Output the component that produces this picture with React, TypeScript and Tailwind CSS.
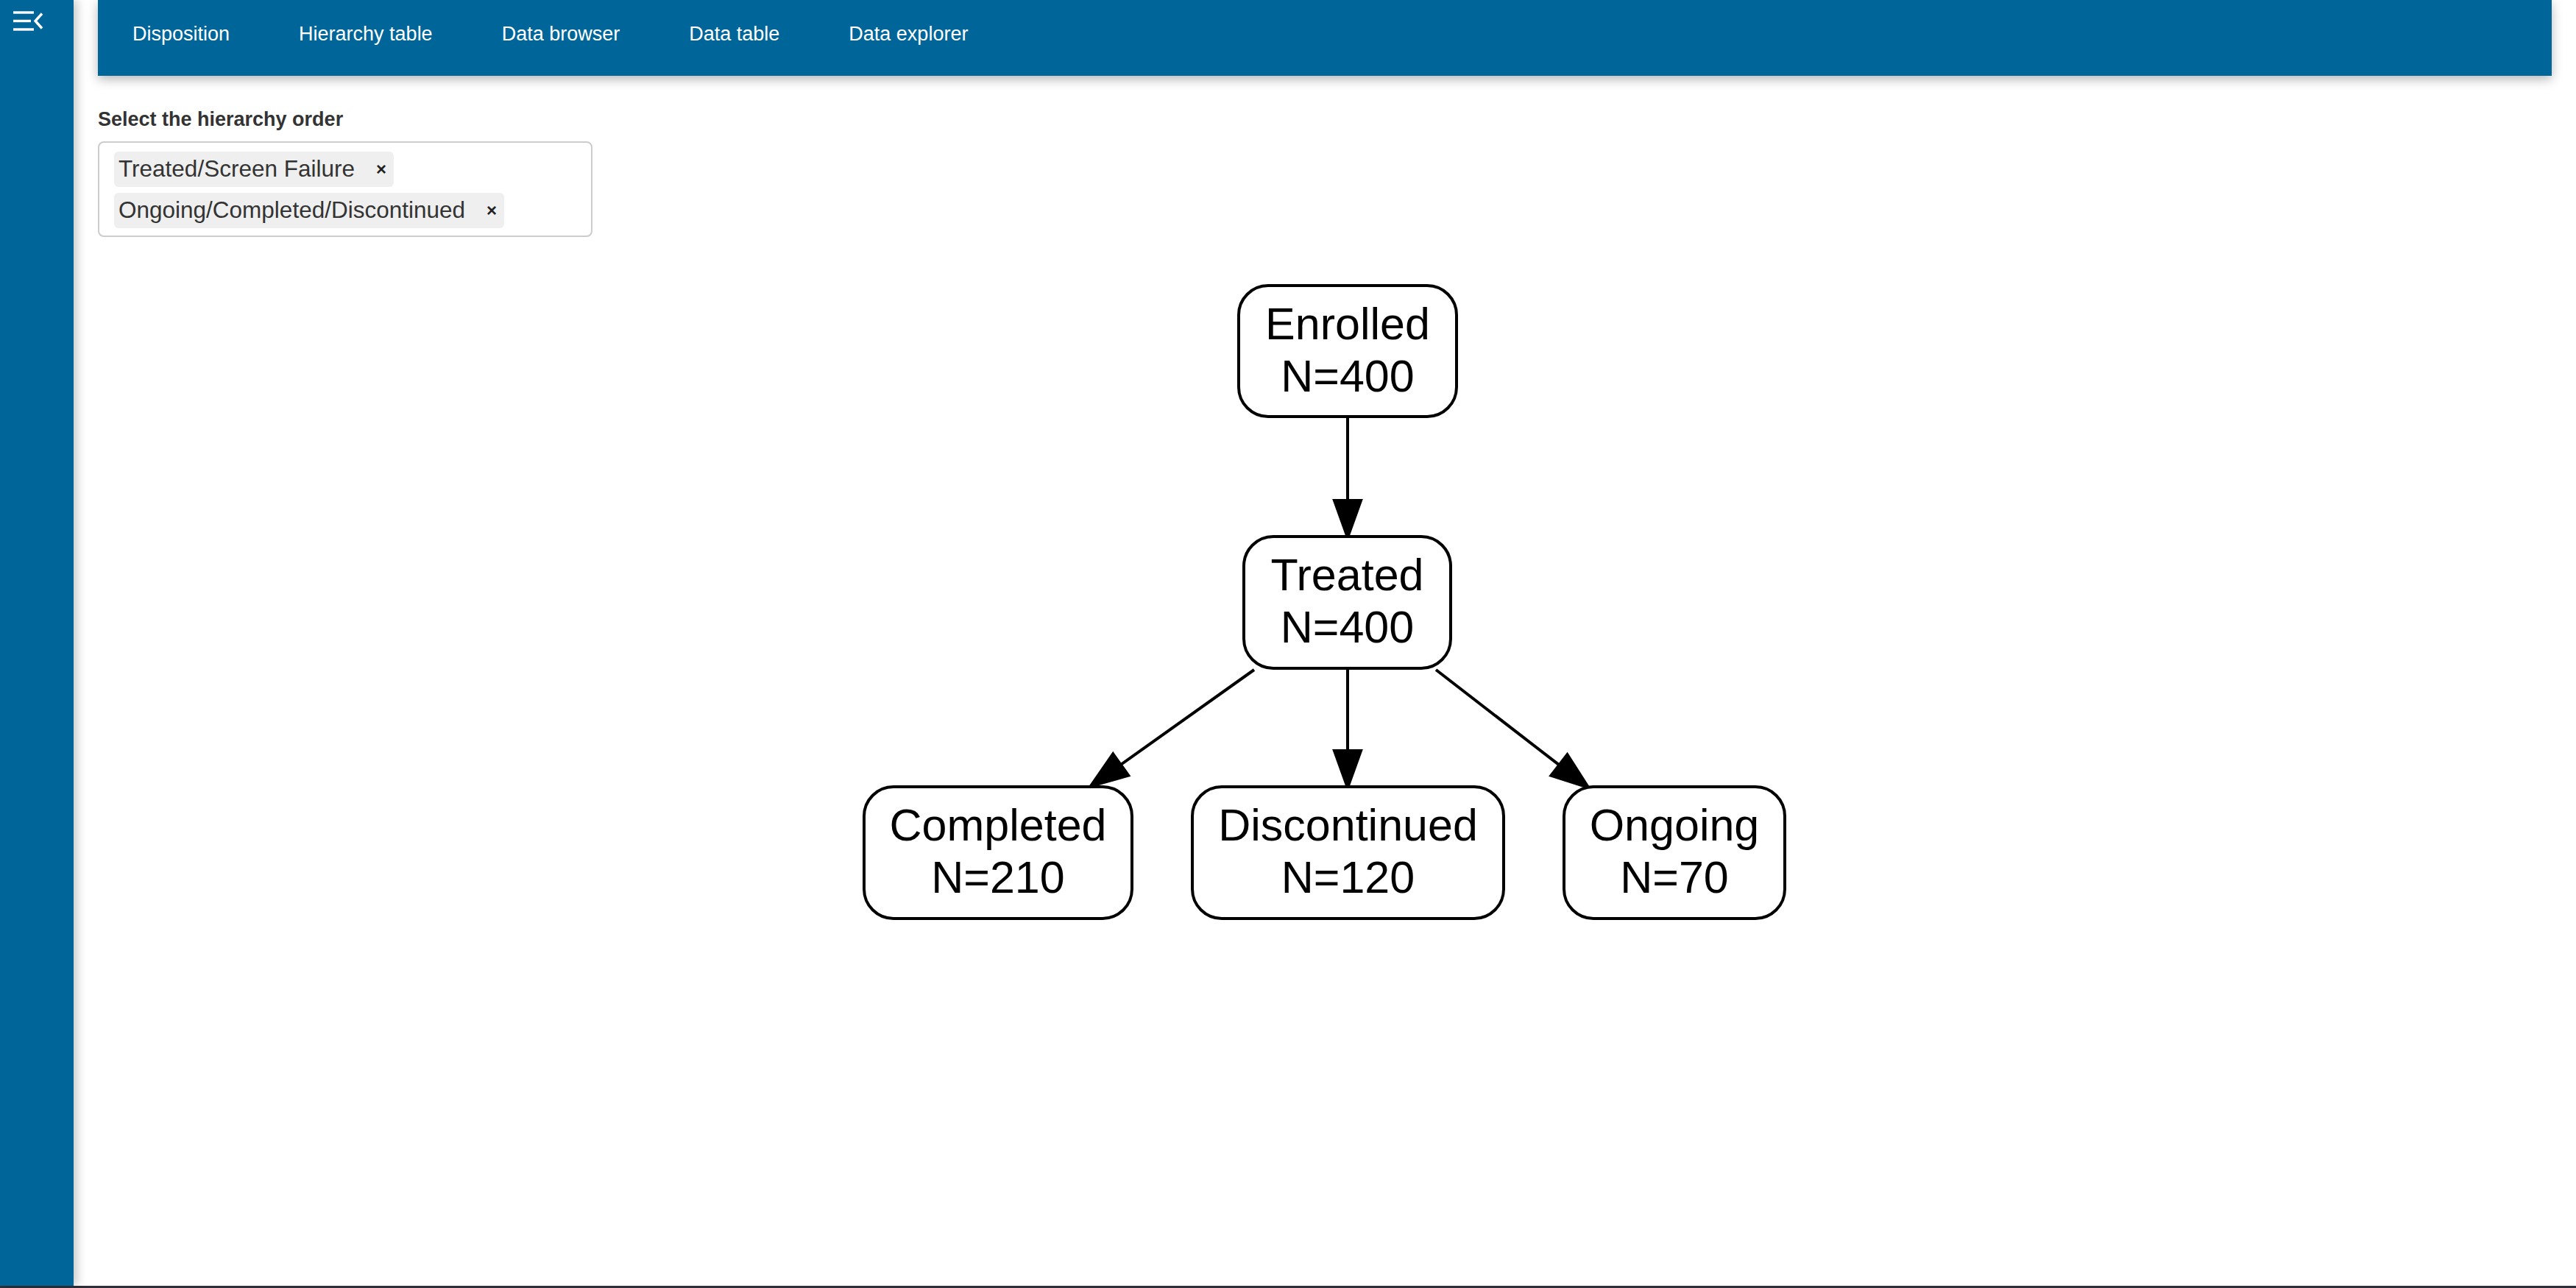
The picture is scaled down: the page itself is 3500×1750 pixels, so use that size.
import React from "react";

const tabs = ["Disposition", "Hierarchy table", "Data browser", "Data table", "Data explorer"];

const chips = ["Treated/Screen Failure", "Ongoing/Completed/Discontinued"];

type Node = { x1: number; x2: number; y1: number; y2: number; label: string; n: string };

// graph coordinates, svg space (origin at page 1170,380)
const nodes: Node[] = [
  { x1: 511, x2: 811, y1: 7, y2: 189, label: "Enrolled", n: "N=400" },
  { x1: 518, x2: 803, y1: 348, y2: 531, label: "Treated", n: "N=400" },
  { x1: 2, x2: 370, y1: 688, y2: 871, label: "Completed", n: "N=210" },
  { x1: 448, x2: 875, y1: 688, y2: 871, label: "Discontinued", n: "N=120" },
  { x1: 953, x2: 1257, y1: 688, y2: 871, label: "Ongoing", n: "N=70" },
];

const edges: [number, number, number, number][] = [
  [661, 189, 661, 351],
  [661, 531, 661, 691],
  [534, 531, 312, 689],
  [781, 531, 988, 691],
];

function Edge({ e }: { e: [number, number, number, number] }) {
  const [sx, sy, tx, ty] = e;
  const len = Math.hypot(tx - sx, ty - sy);
  const dx = (tx - sx) / len;
  const dy = (ty - sy) / len;
  const bx = tx - dx * 50;
  const by = ty - dy * 50;
  const px = -dy * 18;
  const py = dx * 18;
  return (
    <g>
      <line x1={sx} y1={sy} x2={bx} y2={by} stroke="#000" strokeWidth={4} />
      <polygon
        points={`${bx + px},${by + py} ${bx - px},${by - py} ${tx},${ty}`}
        fill="#000"
        stroke="#000"
        strokeWidth={4}
        strokeLinejoin="miter"
      />
    </g>
  );
}

function Graph() {
  return (
    <svg width={1260} height={880} viewBox="0 0 1260 880" className="mx-auto mt-[57px] block">
      {edges.map((e, i) => (
        <Edge key={i} e={e} />
      ))}
      {nodes.map((n) => {
        const cx = (n.x1 + n.x2) / 2;
        return (
          <g key={n.label}>
            <rect
              x={n.x1 + 2}
              y={n.y1 + 2}
              width={n.x2 - n.x1 - 4}
              height={n.y2 - n.y1 - 4}
              rx={40}
              ry={40}
              fill="#fff"
              stroke="#000"
              strokeWidth={4}
            />
            <text
              x={cx}
              y={n.y1 + 75}
              textAnchor="middle"
              fontFamily="'Liberation Sans', Arial, sans-serif"
              fontSize={61}
              fill="#000"
            >
              {n.label}
            </text>
            <text
              x={cx}
              y={n.y1 + 146}
              textAnchor="middle"
              fontFamily="'Liberation Sans', Arial, sans-serif"
              fontSize={61}
              fill="#000"
            >
              {n.n}
            </text>
          </g>
        );
      })}
    </svg>
  );
}

function ToggleIcon() {
  return (
    <svg width="44" height="30" viewBox="0 0 44 30" fill="none" stroke="#fff" strokeWidth="3.4">
      <line x1="0" y1="2" x2="28" y2="2" />
      <line x1="0" y1="13.5" x2="24" y2="13.5" />
      <line x1="0" y1="25" x2="28" y2="25" />
      <polyline points="39,3.5 30,13.5 39,23.5" strokeLinejoin="miter" />
    </svg>
  );
}

export default function App() {
  return (
    <div className="h-[1750px] w-[3500px] overflow-hidden bg-white font-['Liberation_Sans',Arial,sans-serif]">
      <div className="flex h-[1747px]">
        {/* Sidebar */}
        <aside className="relative z-10 w-[100px] shrink-0 bg-[#006699] shadow-[5px_0_12px_rgba(0,0,0,0.22)]">
          <div className="pl-[18px] pt-[15px]">
            <ToggleIcon />
          </div>
        </aside>

        {/* Main */}
        <main className="flex-1 px-[33px]">
          <nav className="flex h-[103px] items-center bg-[#006699] pb-[10px] shadow-[0_5px_14px_rgba(0,0,0,0.28)]">
            {tabs.map((t) => (
              <div key={t} className="px-[47px] text-[27px] text-white">
                {t}
              </div>
            ))}
          </nav>

          <div className="mt-[44px] text-[27px] font-bold leading-[31px] text-[#333]">
            Select the hierarchy order
          </div>

          <div className="mt-[14px] w-[672px] rounded-[8px] border-2 border-[#cccccc] pb-[10px] pl-[20px] pt-[12px]">
            <div className="flex flex-col items-start gap-[8px]">
              {chips.map((c) => (
                <div
                  key={c}
                  className="flex h-[48px] items-center rounded-[6px] bg-[#efefef] pl-[6px] pr-[10px] text-[31.5px] text-[#333]"
                >
                  <span>{c}</span>
                  <span className="ml-[29px] text-[24px] font-bold leading-none text-[#222]">×</span>
                </div>
              ))}
            </div>
          </div>

          <Graph />
        </main>
      </div>
      <div className="h-[3px] bg-[#2d3039]" />
    </div>
  );
}
